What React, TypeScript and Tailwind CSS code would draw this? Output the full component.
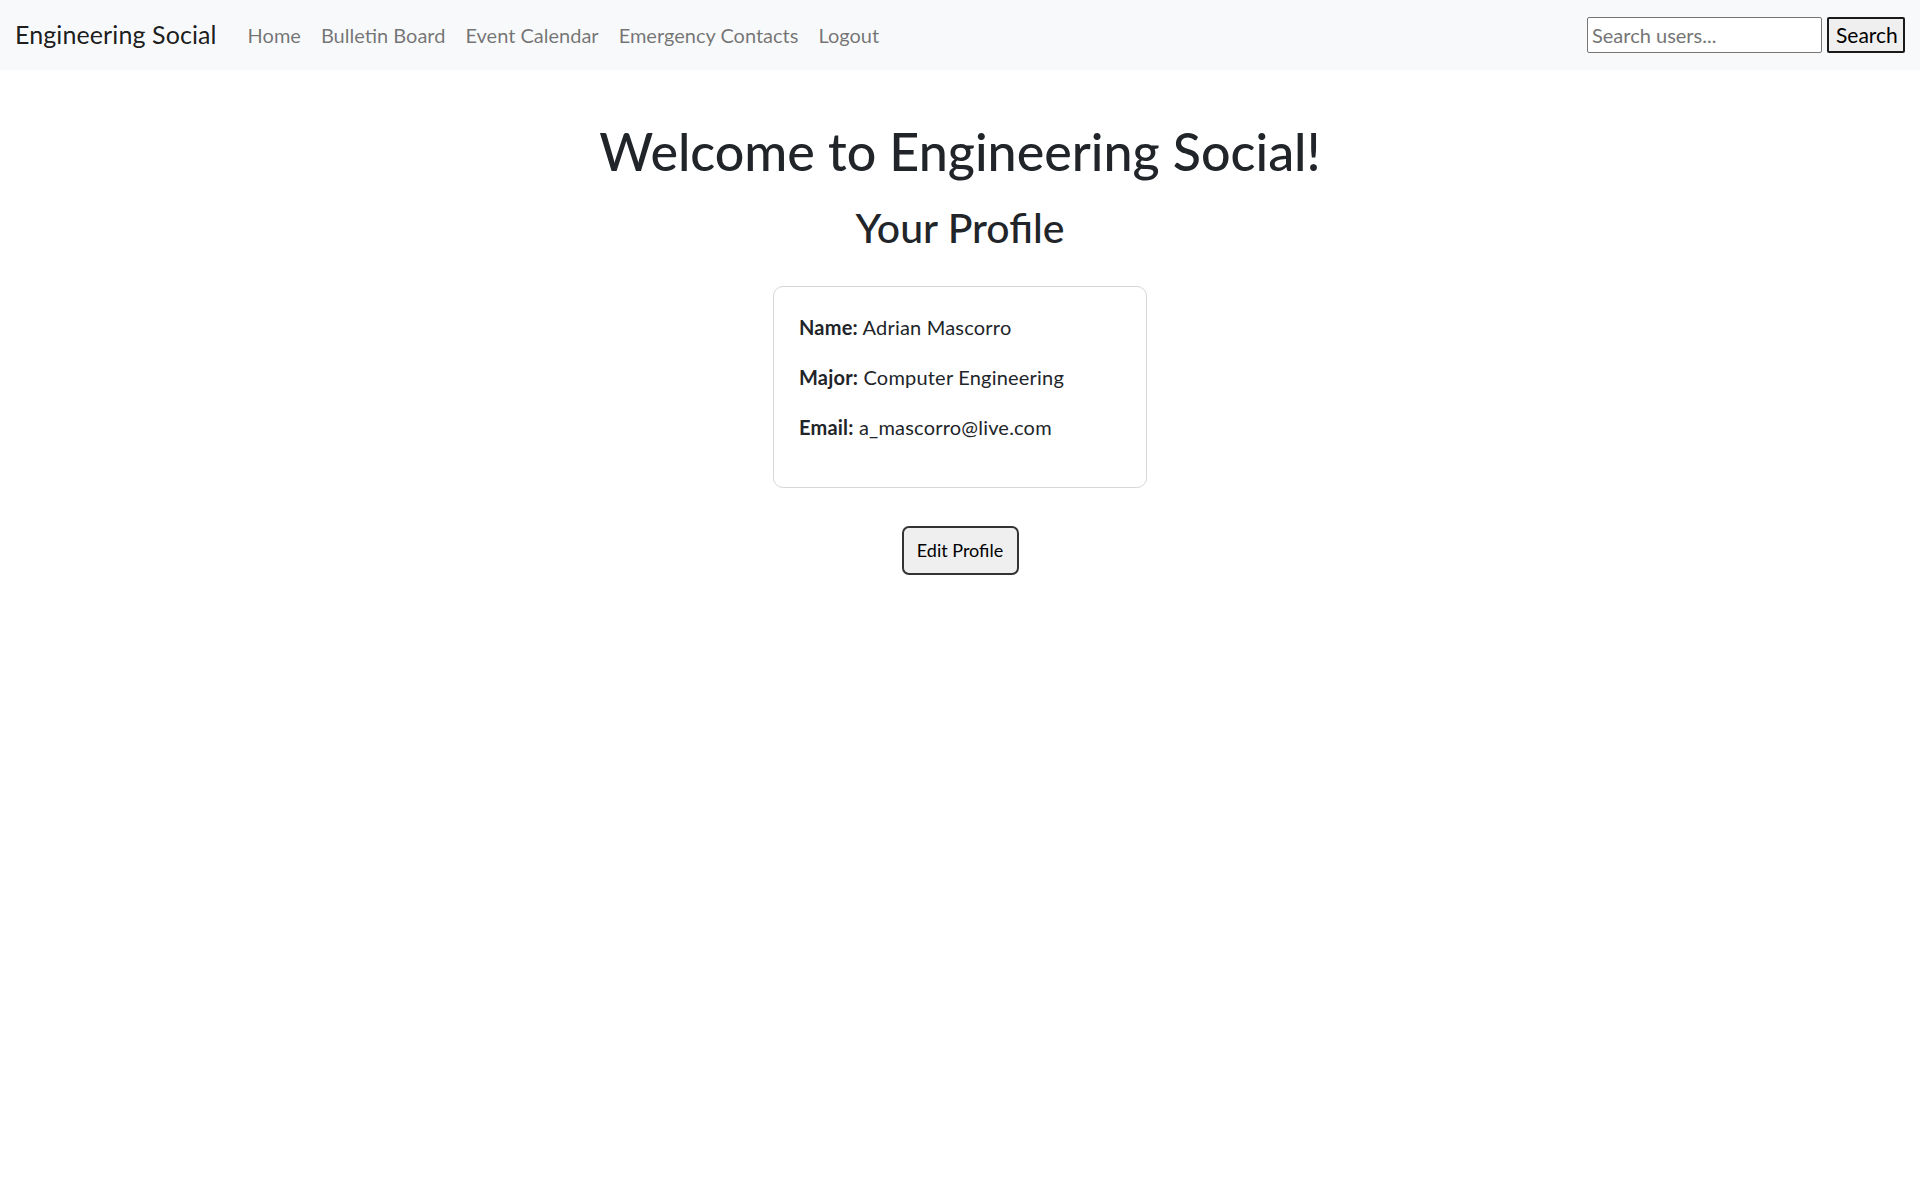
import React, { useState } from 'react';

const links = ['Home', 'Bulletin Board', 'Event Calendar', 'Emergency Contacts', 'Logout'];

export default function App() {
  const [query, setQuery] = useState('');

  return (
    <div className="min-h-screen bg-white text-[#212529] font-['Segoe_UI',Lato,sans-serif]">
      {/* Navbar */}
      <nav className="h-[70px] bg-[#f8f9fa] flex items-center justify-between px-[15px]">
        <div className="flex items-center">
          <a href="#" className="text-[25px] text-black/90 mr-[21px] tracking-[0.1px]">
            Engineering Social
          </a>
          <ul className="flex items-center">
            {links.map((l) => (
              <li key={l}>
                <a href="#" className="px-[10px] text-[20px] text-black/55">
                  {l}
                </a>
              </li>
            ))}
          </ul>
        </div>
        <form className="flex items-center gap-[5px]" onSubmit={(e) => e.preventDefault()}>
          <input
            value={query}
            onChange={(e) => setQuery(e.target.value)}
            placeholder="Search users..."
            className="w-[235px] h-[36px] bg-white border border-[#767676] rounded-[2px] px-[4px] text-[20px] placeholder:text-[#757575] outline-none"
          />
          <button className="w-[78px] h-[36px] bg-[#efefef] border-2 border-[#1a1a1a] rounded-[2px] text-[21px] text-black overflow-hidden whitespace-nowrap pl-[7px] text-left">
            Search
          </button>
        </form>
      </nav>

      {/* Main */}
      <main className="flex flex-col items-center text-center pt-[51px]">
        <h1 className="text-[52px] leading-[60px] font-medium">Welcome to Engineering Social!</h1>
        <h2 className="text-[41px] leading-[48px] font-medium mt-[23px]">Your Profile</h2>

        <div className="mt-[34px] w-[374px] border border-[#d6d6d6] rounded-[10px] p-[25px] text-left text-[20px] leading-[30px] tracking-[0.2px]">
          <p className="mb-[20px]">
            <strong>Name:</strong> Adrian Mascorro
          </p>
          <p className="mb-[20px]">
            <strong>Major:</strong> Computer Engineering
          </p>
          <p className="mb-[20px]">
            <strong>Email:</strong> a_mascorro@live.com
          </p>
        </div>

        <button className="mt-[38px] w-[117px] h-[49px] bg-[#efefef] border-2 border-[#333] rounded-[7px] text-[18px] text-black">
          Edit Profile
        </button>
      </main>
    </div>
  );
}
